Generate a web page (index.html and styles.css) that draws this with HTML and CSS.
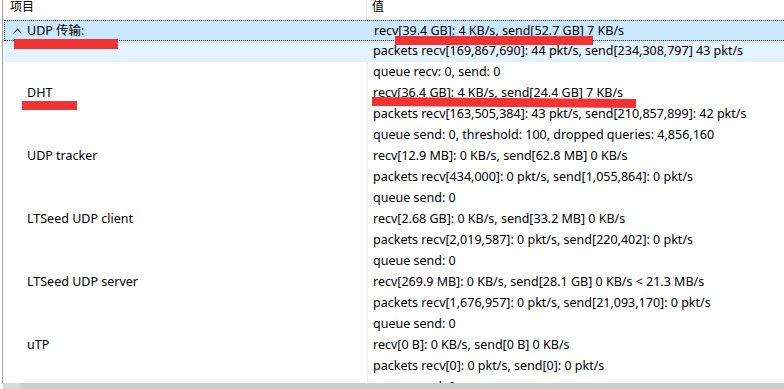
FILE: index.html
```html
<!DOCTYPE html>
<html lang="zh-CN">
<head>
  <meta charset="UTF-8" />
  <title>UDP 统计</title>
  <link rel="stylesheet" href="styles.css">
</head>
<body>
  <div class="view">
    <div class="tree">
      <div class="head">
        <div class="col-name">项目</div>
        <div class="col-value">值</div>
      </div>

      <div class="row selected">
        <div class="col-name group">
          <svg class="chevron" width="9" height="6" viewBox="0 0 9 6"><polyline points="0.5,5.5 4.5,1 8.5,5.5" fill="none" stroke="#333" stroke-width="1.1"/></svg>
          UDP 传输:
        </div>
        <div class="col-value">recv[39.4 GB]: 4 KB/s, send[52.7 GB] 7 KB/s</div>
      </div>
      <div class="row hover">
        <div class="col-name"></div>
        <div class="col-value">packets recv[169,867,690]: 44 pkt/s, send[234,308,797] 43 pkt/s</div>
      </div>
      <div class="row">
        <div class="col-name"></div>
        <div class="col-value">queue recv: 0, send: 0</div>
      </div>

      <div class="row">
        <div class="col-name">DHT</div>
        <div class="col-value">recv[36.4 GB]: 4 KB/s, send[24.4 GB] 7 KB/s</div>
      </div>
      <div class="row">
        <div class="col-name"></div>
        <div class="col-value">packets recv[163,505,384]: 43 pkt/s, send[210,857,899]: 42 pkt/s</div>
      </div>
      <div class="row">
        <div class="col-name"></div>
        <div class="col-value">queue send: 0, threshold: 100, dropped queries: 4,856,160</div>
      </div>

      <div class="row">
        <div class="col-name">UDP tracker</div>
        <div class="col-value">recv[12.9 MB]: 0 KB/s, send[62.8 MB] 0 KB/s</div>
      </div>
      <div class="row">
        <div class="col-name"></div>
        <div class="col-value">packets recv[434,000]: 0 pkt/s, send[1,055,864]: 0 pkt/s</div>
      </div>
      <div class="row">
        <div class="col-name"></div>
        <div class="col-value">queue send: 0</div>
      </div>

      <div class="row">
        <div class="col-name">LTSeed UDP client</div>
        <div class="col-value">recv[2.68 GB]: 0 KB/s, send[33.2 MB] 0 KB/s</div>
      </div>
      <div class="row">
        <div class="col-name"></div>
        <div class="col-value">packets recv[2,019,587]: 0 pkt/s, send[220,402]: 0 pkt/s</div>
      </div>
      <div class="row">
        <div class="col-name"></div>
        <div class="col-value">queue send: 0</div>
      </div>

      <div class="row">
        <div class="col-name">LTSeed UDP server</div>
        <div class="col-value">recv[269.9 MB]: 0 KB/s, send[28.1 GB] 0 KB/s &lt; 21.3 MB/s</div>
      </div>
      <div class="row">
        <div class="col-name"></div>
        <div class="col-value">packets recv[1,676,957]: 0 pkt/s, send[21,093,170]: 0 pkt/s</div>
      </div>
      <div class="row">
        <div class="col-name"></div>
        <div class="col-value">queue send: 0</div>
      </div>

      <div class="row">
        <div class="col-name">uTP</div>
        <div class="col-value">recv[0 B]: 0 KB/s, send[0 B] 0 KB/s</div>
      </div>
      <div class="row">
        <div class="col-name"></div>
        <div class="col-value">packets recv[0]: 0 pkt/s, send[0]: 0 pkt/s</div>
      </div>
      <div class="row">
        <div class="col-name"></div>
        <div class="col-value">queue send: 0</div>
      </div>
    </div>

    <div class="hscroll"><span class="arrow"></span></div>

    <!-- 打码的红线 -->
    <span class="mark mark-1"></span>
    <span class="mark mark-2"></span>
    <span class="mark mark-3"></span>
    <span class="mark mark-4"></span>
  </div>
</body>
</html>
```

FILE: styles.css
```css
html, body {
  margin: 0;
  background: #fff;
}

body {
  font-family: "Noto Sans", "Noto Sans CJK SC", sans-serif;
  font-size: 12.5px;
  color: #000;
}

.view {
  position: relative;
  width: 784px;
  height: 389px;
  overflow: hidden;
}

.tree {
  height: 383px;
  margin-left: 2px;
  border-left: 1px solid #a0a0a0;
  overflow: hidden;
}

.head,
.row {
  display: grid;
  grid-template-columns: 363px 1fr;
}

.head {
  height: 20px;
}

.head .col-name,
.head .col-value {
  padding-top: 1px;
  font-size: 12px;
  line-height: 12px;
}

.head .col-name {
  padding-left: 7px;
}

.row {
  height: 21px;
  line-height: 20px;
  margin-left: 1px;
  box-sizing: border-box;
}

.col-name {
  padding-left: 23px;
  white-space: nowrap;
}

.col-value {
  padding-left: 5px;
  border-left: 1px solid #ececec;
  white-space: nowrap;
}

.row.selected {
  background: #cce8ff;
  border: 1px dotted #333;
  border-right: none;
}

.row.selected .col-name {
  padding-left: 22px;
  position: relative;
}

.row.selected .col-value {
  border-left-color: transparent;
}

.row.hover {
  background: #e5f3ff;
}

.row.hover .col-value {
  border-left-color: transparent;
}

.chevron {
  position: absolute;
  left: 8px;
  top: 7px;
}

.hscroll {
  height: 6px;
  margin-left: 3px;
  background: #cdcdcd;
  position: relative;
}

.hscroll .arrow {
  position: absolute;
  left: 0;
  top: 0;
  width: 17px;
  height: 6px;
  background: #dadada;
}

.mark {
  position: absolute;
  background: #f03434;
  height: 10px;
}

.mark-1 { left: 14px; top: 39px; width: 104px; height: 10px; }
.mark-2 { left: 395px; top: 36px; width: 198px; height: 9px; }
.mark-3 { left: 22px; top: 101px; width: 55px; height: 9px; }
.mark-4 { left: 372px; top: 98px; width: 264px; height: 9px; transform: rotate(0.4deg); }
```
